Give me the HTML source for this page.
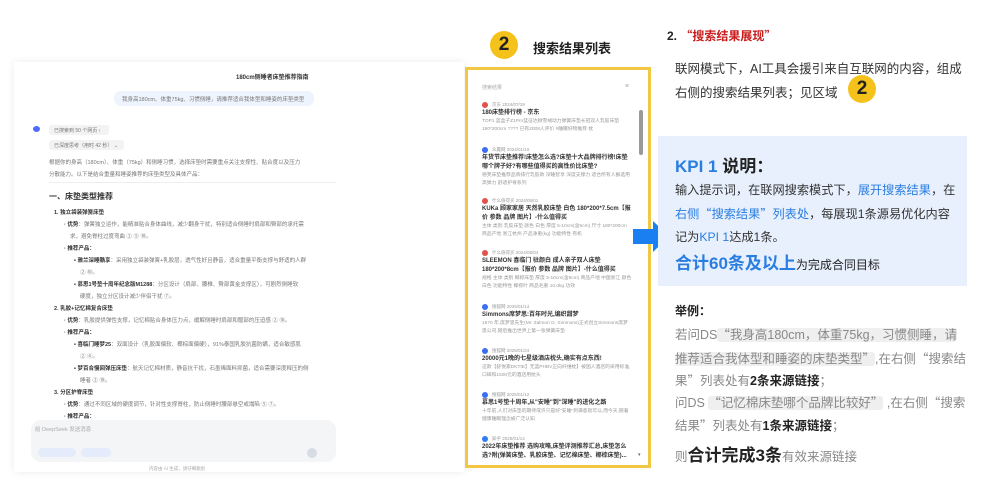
<!DOCTYPE html>
<html><head><meta charset="utf-8"><style>
*{margin:0;padding:0;box-sizing:border-box}
body{width:999px;height:492px;background:#fff;position:relative;overflow:hidden;font-family:"Liberation Sans","Noto Sans CJK SC",sans-serif;color:#222}
.a{position:absolute;white-space:nowrap}
.left{position:absolute;left:14px;top:62px;width:450px;height:410px;background:#fff;box-shadow:0 0 8px rgba(0,0,0,.08)}
.l{position:absolute;white-space:nowrap;font-size:5.5px;color:#777}
.lb{font-weight:bold;color:#333}
.yb{position:absolute;left:465px;top:67px;width:186px;height:401px;border:3px solid #f2c744;background:#fff}
.it{position:absolute;left:14px;width:150px}
.it .s{font-size:4.5px;color:#999;height:9px;display:flex;align-items:center}
.it .s i{display:inline-block;width:6px;height:6px;border-radius:50%;background:#e0534a;margin-right:4px}
.it .t{font-size:6px;font-weight:bold;color:#333;line-height:9px;white-space:normal}
.it .d{font-size:4.8px;color:#999;line-height:8px;white-space:normal}
.badge{position:absolute;border-radius:50%;background:#f5c21c;color:#222;font-weight:bold;text-align:center}
.p{font-size:12.5px;color:#333}
.g{color:#888;font-size:12.5px}
.q{background:#efefef;border-radius:3px}
.cq{font-family:"Noto Sans CJK SC",sans-serif}
</style></head><body>
<div class="left">
 <div class="l lb" style="left:222px;top:10px;font-size:6px">180cm侧睡者床垫推荐指南</div>
 <div class="a" style="left:100px;top:29px;width:200px;height:15px;background:#eef4fd;border-radius:7px"></div>
 <div class="l" style="left:108px;top:33px">我身高180cm、体重75kg、习惯侧睡，请推荐适合我体型和睡姿的床垫类型</div>
 <div class="a" style="left:19px;top:64px;width:7px;height:6px;background:#4d6bfe;border-radius:50%"></div>
 <div class="a" style="left:35px;top:63px;width:60px;height:10px;background:#f3f3f3;border-radius:3px"></div>
 <div class="l" style="left:40px;top:65px;font-size:5px">已搜索到 50 个网页 ›</div>
 <div class="a" style="left:35px;top:78px;width:75px;height:10px;background:#f3f3f3;border-radius:3px"></div>
 <div class="l" style="left:40px;top:80px;font-size:5px">已深度思考（用时 42 秒） ⌄</div>
 <div class="l" style="left:35px;top:96px">根据你的身高（180cm）、体重（75kg）和侧睡习惯，选择床垫时需要重点关注支撑性、贴合度以及压力</div>
 <div class="l" style="left:35px;top:108px">分散能力。以下是结合重量和睡姿推荐的床垫类型及具体产品：</div>
 <div class="a" style="left:35px;top:120px;width:287px;height:1px;background:#eee"></div>
 <div class="l lb" style="left:35px;top:129px;font-size:8px">一、床垫类型推荐</div>
 <div class="l lb" style="left:40px;top:146px">1. 独立袋装弹簧床垫</div>
 <div class="l" style="left:50px;top:158px"><b class="lb">· 优势</b>：弹簧独立运作，能精准贴合身体曲线，减少翻身干扰，特别适合侧睡时肩部和臀部的承托需</div>
 <div class="l" style="left:56px;top:170px">求，避免脊柱过度弯曲 ② ⑤ ⑩。</div>
 <div class="l lb" style="left:50px;top:182px">· 推荐产品：</div>
 <div class="l" style="left:60px;top:194px"><b class="lb">• 雅兰深睡酷享</b>：采用独立袋装弹簧+乳胶层，透气性好且静音，适合重量平衡支撑与舒适的人群</div>
 <div class="l" style="left:66px;top:206px">② ⑩。</div>
 <div class="l" style="left:60px;top:218px"><b class="lb">• 慕思1号垫十周年纪念版M1288</b>：分区设计（肩部、腰椎、臀部黄金支撑区），可剧烈侧睡软</div>
 <div class="l" style="left:66px;top:230px">硬度，独立分区设计减少伴侣干扰 ⑦。</div>
 <div class="l lb" style="left:40px;top:242px">2. 乳胶+记忆棉复合床垫</div>
 <div class="l" style="left:50px;top:254px"><b class="lb">· 优势</b>：乳胶提供弹性支撑，记忆棉贴合身体压力点，缓解侧睡时肩部和髋部的压迫感 ② ⑩。</div>
 <div class="l lb" style="left:50px;top:266px">· 推荐产品：</div>
 <div class="l" style="left:60px;top:278px"><b class="lb">• 喜临门睡梦25</b>：双面设计（乳胶面偏软、椰棕面偏硬），91%泰国乳胶抗菌防螨，适合敏感肌</div>
 <div class="l" style="left:66px;top:290px">② ④。</div>
 <div class="l" style="left:60px;top:302px"><b class="lb">• 梦百合慢回弹压床垫</b>：航天记忆棉材质，静音抗干扰，石墨烯面料抑菌，适合需要深度释压的侧</div>
 <div class="l" style="left:66px;top:314px">睡者 ② ⑩。</div>
 <div class="l lb" style="left:40px;top:326px">3. 分区护脊床垫</div>
 <div class="l" style="left:50px;top:338px"><b class="lb">· 优势</b>：通过不同区域的硬度调节，针对性支撑脊柱，防止侧睡时腰部悬空或塌陷 ⑤ ⑦。</div>
 <div class="l lb" style="left:50px;top:350px">· 推荐产品：</div>
 <div class="l" style="left:60px;top:362px"><b class="lb">• Simmons席梦思Beautyrest甜梦系列</b>：独立袋装弹簧+负离子技术，贴合人体曲线，适合追求</div>
 <div class="a" style="left:17px;top:358px;width:305px;height:42px;background:#f4f5f7;border-radius:10px"></div>
 <div class="l" style="left:21px;top:363px;color:#aaa">给 DeepSeek 发送消息</div>
 <div class="a" style="left:24px;top:386px;width:38px;height:9px;background:#e4ecfb;border-radius:5px"></div>
 <div class="a" style="left:67px;top:386px;width:30px;height:9px;background:#e4ecfb;border-radius:5px"></div>
 <div class="a" style="left:293px;top:386px;width:10px;height:10px;background:#d8dce6;border-radius:50%"></div>
 <div class="l" style="left:135px;top:404px;font-size:4.5px;color:#aaa">内容由 AI 生成，请仔细甄别</div>
</div>

<div class="badge" style="left:490px;top:31px;width:28px;height:28px;font-size:19px;line-height:28px">2</div>
<div class="a" style="left:533px;top:38px;font-size:13px;font-weight:bold">搜索结果列表</div>

<div class="yb">
 <div class="a" style="left:14px;top:14px;font-size:5px;color:#aaa">搜索结果</div>
 <div class="a" style="left:157px;top:13px;font-size:7px;color:#999">×</div>
 <div class="a" style="left:171px;top:40px;width:4px;height:45px;background:#999;border-radius:2px"></div>
 <div class="it" style="top:30px"><div class="s"><i></i>京东 2024/07/19</div><div class="t">180床垫排行榜 - 京东</div><div class="d">TOP1 蓝盒子Z1Pro蓝征达顾雪绒动力弹簧床垫长冠双人乳胶床垫 180*200cm ???? 已有2008人评价 #睡眠好物推荐 枕</div></div>
 <div class="it" style="top:75px"><div class="s"><i style="background:#3a6ff0"></i>众赢网 2024/01/10</div><div class="t">年货节床垫推荐!床垫怎么选?床垫十大品牌排行榜!床垫哪个牌子好?有哪些值得买的高性价比床垫?</div><div class="d">德芙床垫推荐品牌排行乳胶款 深睡智享 深度支撑力 适合所有人群选用 高弹力 舒适护脊系列</div></div>
 <div class="it" style="top:126px"><div class="s"><i></i>什么值得买 2024/05/01</div><div class="t">KUKa 顾家家居 天然乳胶床垫 白色 180*200*7.5cm【报价 参数 品牌 图片】-什么值得买</div><div class="d">主体 类别 乳胶床垫 颜色 白色 厚度 5-10cm(含5cm) 尺寸 180*200cm 商品产地 浙江杭州 产品净重(kg) 功能特性 有机</div></div>
 <div class="it" style="top:178px"><div class="s"><i></i>什么值得买 2024/05/04</div><div class="t">SLEEMON 喜临门 驻颜白 成人亲子双人床垫 180*200*8cm【报价 参数 品牌 图片】-什么值得买</div><div class="d">规格 主体 类别 椰棕床垫 厚度 5-10cm(含5cm) 商品产地 中国浙江 颜色 白色 功能特性 椰棕叶 商品毛重 10.0kg 功效</div></div>
 <div class="it" style="top:232px"><div class="s"><i style="background:#3a6ff0"></i>搜狐网 2025/01/14</div><div class="t">Simmons席梦思:百年时光,编织甜梦</div><div class="d">1870 年,席梦思先生(Mr. Zalmon G. Simmons)正式创立Simmons席梦思公司,随后推出世界上第一张弹簧床垫</div></div>
 <div class="it" style="top:276px"><div class="s"><i style="background:#3a6ff0"></i>搜狐网 2025/01/24</div><div class="t">20000元1晚的七星级酒店枕头,确实有点东西!</div><div class="d">这款【舒悦家DKTIE】无蓝PHBV正向纤维枕】被国人酒店的采用标准,口碑和1500元的酒店用枕头</div></div>
 <div class="it" style="top:320px"><div class="s"><i style="background:#3a6ff0"></i>搜狐网 2025/01/12</div><div class="t">慕思1号垫十周年,从"安睡"到"深睡"的进化之路</div><div class="d">十年前,人们对床垫的期待或许只是好"安睡"到满意就可以,而今天,随着健康睡眠理念被广泛认知</div></div>
 <div class="it" style="top:364px"><div class="s"><i style="background:#2f7cf0"></i>知乎 2025/01/14</div><div class="t">2022年床垫推荐 选购攻略,床垫评测推荐汇总,床垫怎么选?附(弹簧床垫、乳胶床垫、记忆棉床垫、椰棕床垫)...</div></div>
 <div class="a" style="left:170px;top:382px;font-size:5px;color:#666">▾</div>
</div>

<svg class="a" style="left:633px;top:221px" width="36" height="31" viewBox="0 0 36 31"><path d="M0 8H20V0L36 15.5 20 31V23H0Z" fill="#1a7ff0"/></svg>

<div class="a" style="left:667px;top:27px;font-size:12px;font-weight:bold">2. <span style="color:#c81e1e" class="cq">“搜索结果展现”</span></div>
<div class="a p" style="left:675px;top:58px">联网模式下，AI工具会援引来自互联网的内容，组成</div>
<div class="a p" style="left:675px;top:82px">右侧的搜索结果列表；见区域</div>
<div class="badge" style="left:848px;top:75px;width:28px;height:28px;font-size:19px;line-height:28px">2</div>

<div class="a" style="left:658px;top:136px;width:309px;height:150px;background:#e7f0fc"></div>
<div class="a" style="left:675px;top:152px;font-size:17px;font-weight:bold"><span style="color:#2a7de1">KPI 1</span> 说明：</div>
<div class="a p" style="left:675px;top:180px;font-size:12.2px">输入提示词，在联网搜索模式下，<span style="color:#2a7de1">展开搜索结果</span>，在</div>
<div class="a p" style="left:675px;top:204px;font-size:12.2px"><span style="color:#2a7de1">右侧<span class="cq">“</span>搜索结果<span class="cq">”</span>列表处</span>，每展现1条源易优化内容</div>
<div class="a p" style="left:675px;top:227px;font-size:12.2px">记为<span style="color:#2a7de1">KPI 1</span>达成1条。</div>
<div class="a" style="left:675px;top:249px;font-size:12px"><span style="color:#2a7de1;font-size:17px;font-weight:bold">合计60条及以上</span>为完成合同目标</div>

<div class="a" style="left:675px;top:302px;font-size:12px;font-weight:bold">举例：</div>
<div class="a g" style="left:675px;top:324px">若问DS<span class="q"><span class="cq">“</span>我身高180cm，体重75kg，习惯侧睡，请</span></div>
<div class="a g" style="left:675px;top:348px"><span class="q">推荐适合我体型和睡姿的床垫类型<span class="cq">”</span></span>,在右侧<span class="cq">“</span>搜索结</div>
<div class="a g" style="left:675px;top:370px">果<span class="cq">”</span>列表处有<b style="color:#222">2条来源链接</b>；</div>
<div class="a g" style="left:675px;top:392px">问DS <span class="q"><span class="cq">“</span>记忆棉床垫哪个品牌比较好<span class="cq">”</span></span> ,在右侧<span class="cq">“</span>搜索</div>
<div class="a g" style="left:675px;top:415px">结果<span class="cq">”</span>列表处有<b style="color:#222">1条来源链接</b>；</div>
<div class="a g" style="left:675px;top:441px">则<b style="color:#222;font-size:17px">合计完成3条</b>有效来源链接</div>
</body></html>
